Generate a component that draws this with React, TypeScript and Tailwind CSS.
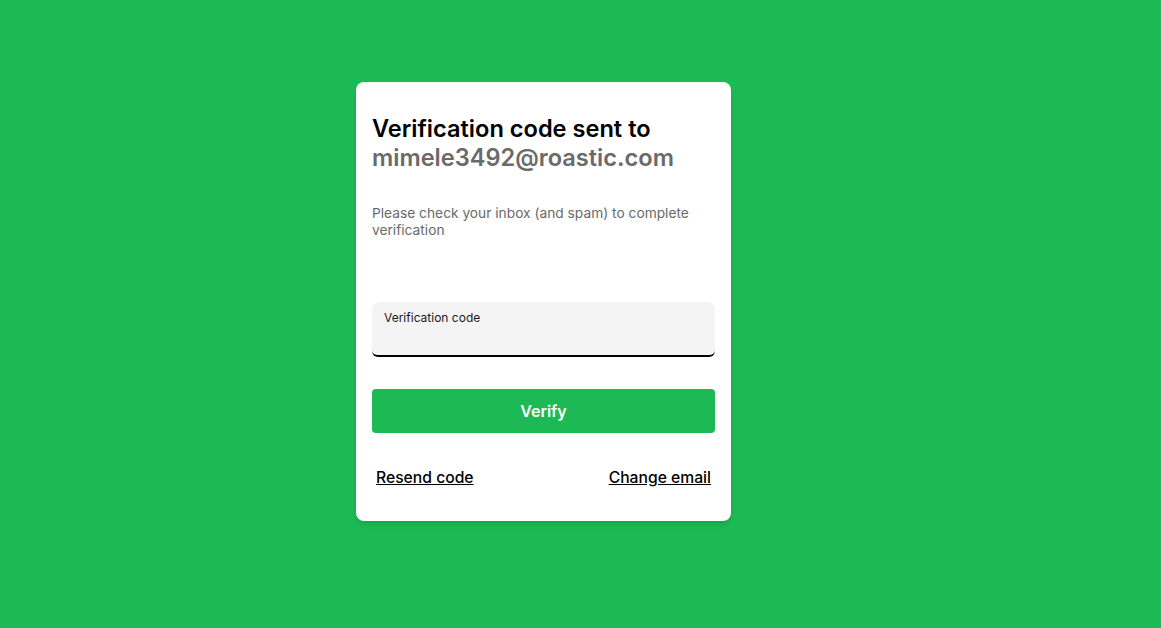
export default function App() {
  return (
    <div
      className="min-h-screen bg-[#1db954] flex justify-center pr-[74px] pt-[82px]"
      style={{ fontFamily: 'Inter, "Noto Sans", sans-serif' }}
    >
      {/* Card */}
      <div className="w-[375px] h-fit bg-white rounded-lg shadow-md px-4 pt-8 pb-[31px]">
        <h1 className="text-[23.6px] leading-[29px] font-semibold text-black">
          Verification code sent to
          <br />
          <span className="text-[#6a6a6a]">mimele3492@roastic.com</span>
        </h1>

        <p className="mt-[33px] text-[13.75px] leading-[17px] text-[#6a6a6a]">
          Please check your inbox (and spam) to complete verification
        </p>

        {/* Input */}
        <div className="mt-[63px] h-[55px] bg-[#f4f4f4] rounded-t-lg rounded-b-md border-b-2 border-black px-3 pt-2">
          <label className="block text-xs leading-4 text-[#1a1a1a]">Verification code</label>
        </div>

        <button className="mt-8 w-full h-11 rounded bg-[#1db954] text-white font-semibold text-base">
          Verify
        </button>

        <div className="mt-[33px] flex justify-between px-1 leading-6 text-[15.7px]">
          <a href="#" className="underline text-black font-medium">Resend code</a>
          <a href="#" className="underline text-black font-medium">Change email</a>
        </div>
      </div>
    </div>
  );
}
